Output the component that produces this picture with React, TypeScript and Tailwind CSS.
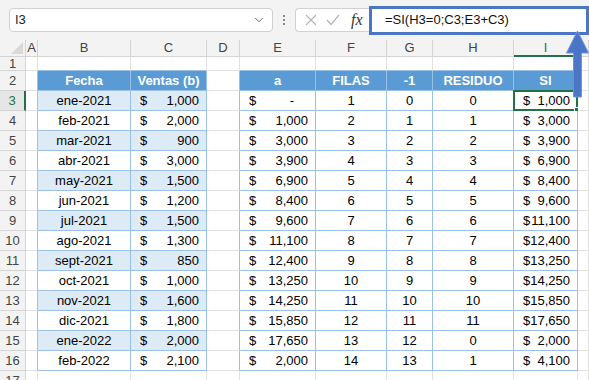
import { ChevronDown } from "lucide-react";

const colLetters = ["", "A", "B", "C", "D", "E", "F", "G", "H", "I", ""];

const fechas = ["ene-2021", "feb-2021", "mar-2021", "abr-2021", "may-2021", "jun-2021", "jul-2021", "ago-2021", "sept-2021", "oct-2021", "nov-2021", "dic-2021", "ene-2022", "feb-2022"];
const ventas = ["1,000", "2,000", "900", "3,000", "1,500", "1,200", "1,500", "1,300", "850", "1,000", "1,600", "1,800", "2,000", "2,100"];
const acum = ["-", "1,000", "3,000", "3,900", "6,900", "8,400", "9,600", "11,100", "12,400", "13,250", "14,250", "15,850", "17,650", "2,000"];
const residuo = [0, 1, 2, 3, 4, 5, 6, 7, 8, 9, 10, 11, 0, 1];
const si = ["1,000", "3,000", "3,900", "6,900", "8,400", "9,600", "11,100", "12,400", "13,250", "14,250", "15,850", "17,650", "2,000", "4,100"];

const headers: Record<number, string> = { 2: "Fecha", 3: "Ventas (b)", 5: "a", 6: "FILAS", 7: "-1", 8: "RESIDUO", 9: "SI" };

function inTable(r: number, c: number) {
  if (r < 2 || r > 16) return false;
  return c === 2 || c === 3 || (c >= 5 && c <= 9);
}

function Money({ v, zeroPad }: { v: string; zeroPad?: boolean }) {
  return (
    <div className="flex w-full items-center justify-between pl-[9px] pr-[7px]">
      <span>$</span>
      <span className={zeroPad ? "pr-[14px]" : ""}>{v}</span>
    </div>
  );
}

function cellContent(r: number, c: number) {
  if (r === 2 && headers[c]) return <span className="w-full text-center font-bold text-white">{headers[c]}</span>;
  if (r < 3 || r > 16) return null;
  const i = r - 3;
  if (c === 2) return <span className="w-full text-center">{fechas[i]}</span>;
  if (c === 3) return <Money v={ventas[i]} />;
  if (c === 5) return <Money v={acum[i]} zeroPad={acum[i] === "-"} />;
  if (c === 6) return <span className="w-full text-center">{i + 1}</span>;
  if (c === 7) return <span className="w-full text-center">{i}</span>;
  if (c === 8) return <span className="w-full text-center">{residuo[i]}</span>;
  if (c === 9) return <Money v={si[i]} />;
  return null;
}

function Cell({ r, c }: { r: number; c: number }) {
  const blueR = inTable(r, c) || inTable(r, c + 1);
  const blueB = inTable(r, c) || inTable(r + 1, c);
  let bg = "bg-white";
  if (r === 2 && inTable(r, c)) bg = "bg-[#5b9bd5]";
  else if ((c === 2 || c === 3) && r >= 3 && r <= 16 && r % 2 === 1) bg = "bg-[#ddebf7]";
  return (
    <div
      className={`relative flex items-center border-r border-b ${bg} ${blueR ? "border-r-[#9bc2e6]" : "border-r-[#e1e1e1]"} ${blueB ? "border-b-[#9bc2e6]" : "border-b-[#e1e1e1]"}`}
    >
      {cellContent(r, c)}
      {r === 3 && c === 9 && (
        <>
          <div className="absolute -top-px -left-px -right-px -bottom-px border-2 border-[#217346]" />
          <div className="absolute -right-[3px] -bottom-[3px] h-[6px] w-[6px] border border-white bg-[#217346]" />
        </>
      )}
    </div>
  );
}

export default function App() {
  const rows = Array.from({ length: 17 }, (_, k) => k + 1);
  return (
    <div className="relative h-[380px] w-[589px] overflow-hidden bg-white text-[13px] text-black" style={{ fontFamily: '"Liberation Sans", Arial, sans-serif' }}>
      {/* formula bar */}
      <div className="flex h-[40px] items-center bg-[#f3f3f3] pl-[9px]">
        <div className="flex h-[24px] w-[264px] items-center justify-between rounded-[4px] border border-[#d1d1d1] bg-white pl-[5px] pr-[6px] text-[#222]">
          <span>I3</span>
          <ChevronDown size={14} strokeWidth={1.5} className="text-[#555]" />
        </div>
        <div className="flex w-[22px] flex-col items-center gap-[2px]">
          <span className="h-[2px] w-[2px] bg-[#888]" />
          <span className="h-[2px] w-[2px] bg-[#888]" />
          <span className="h-[2px] w-[2px] bg-[#888]" />
        </div>
        <div className="flex h-[24px] flex-1 items-center rounded-l-[4px] border border-r-0 border-[#d1d1d1] bg-white">
          <div className="flex w-[73px] items-center pl-[9px]">
            <svg width="12" height="12" viewBox="0 0 12 12" className="mr-[9px]">
              <path d="M1 1 L11 11 M11 1 L1 11" stroke="#b5b5b5" strokeWidth="1.2" fill="none" />
            </svg>
            <svg width="14" height="12" viewBox="0 0 14 12" className="mr-[11px]">
              <path d="M1 6 L5 10.5 L13 1" stroke="#b5b5b5" strokeWidth="1.2" fill="none" />
            </svg>
            <span className="text-[16px] italic text-[#333]" style={{ fontFamily: '"Liberation Serif", serif' }}>fx</span>
          </div>
          <div className="-my-[4px] flex h-[29px] flex-1 items-center border-[3px] border-[#4a76c5] bg-white pl-[13px] text-[#111]">
            =SI(H3=0;C3;E3+C3)
          </div>
        </div>
      </div>

      {/* sheet */}
      <div className="grid grid-cols-[26px_12px_93px_76px_33px_76px_71px_46px_81px_64px_1fr] grid-rows-[17px_14px_repeat(16,20px)]">
        {colLetters.map((l, c) => (
          <div
            key={`h${c}`}
            className={`relative flex items-center justify-center border-r border-b border-[#d4d4d4] bg-[#f3f3f3] ${c === 9 ? "border-b-2 border-b-[#217346] bg-[#e6e6e6] text-[#217346]" : "text-[#444]"}`}
          >
            {c === 0 ? (
              <svg width="12" height="12" viewBox="0 0 12 12" className="absolute right-[2px] bottom-[2px]">
                <path d="M12 0 L12 12 L0 12 Z" fill="#d9d9d9" />
              </svg>
            ) : (
              l
            )}
          </div>
        ))}
        {rows.map((r) =>
          colLetters.map((_, c) =>
            c === 0 ? (
              <div
                key={`${r}-${c}`}
                className={`flex items-center justify-center border-r border-b border-b-[#d4d4d4] ${r === 3 ? "border-r-2 border-r-[#217346] bg-[#e6e6e6] text-[#217346]" : "border-r-[#d4d4d4] bg-[#f3f3f3] text-[#444]"}`}
              >
                {r}
              </div>
            ) : (
              <Cell key={`${r}-${c}`} r={r} c={c} />
            )
          )
        )}
      </div>

      {/* arrow */}
      <svg className="absolute left-[566px] top-[31px]" width="23" height="67" viewBox="0 0 23 67">
        <path d="M11.5 0 L22.5 22 L15.5 22 L15.5 66 L7.5 66 L7.5 22 L0.5 22 Z" fill="#4a76c5" stroke="#6f95d8" strokeWidth="1" />
      </svg>
    </div>
  );
}
